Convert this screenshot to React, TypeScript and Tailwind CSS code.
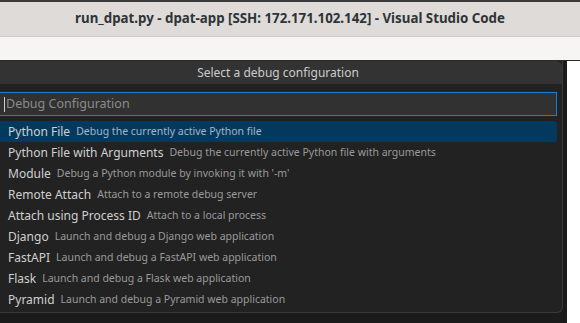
const items: { label: string; desc: string }[] = [
  { label: "Python File", desc: "Debug the currently active Python file" },
  { label: "Python File with Arguments", desc: "Debug the currently active Python file with arguments" },
  { label: "Module", desc: "Debug a Python module by invoking it with '-m'" },
  { label: "Remote Attach", desc: "Attach to a remote debug server" },
  { label: "Attach using Process ID", desc: "Attach to a local process" },
  { label: "Django", desc: "Launch and debug a Django web application" },
  { label: "FastAPI", desc: "Launch and debug a FastAPI web application" },
  { label: "Flask", desc: "Launch and debug a Flask web application" },
  { label: "Pyramid", desc: "Launch and debug a Pyramid web application" },
];

export default function App() {
  return (
    <div
      className="w-[580px] h-[323px] overflow-hidden bg-white flex flex-col"
      style={{ fontFamily: '"Noto Sans", "Open Sans", sans-serif' }}
    >
      {/* window title bar */}
      <div className="h-[2px] bg-[#3b3b3b] shrink-0" />
      <div className="h-[35px] shrink-0 bg-[#dedbd8] border-b border-[#cdc9c5] flex items-center justify-center">
        <span className="text-[13.3px] font-bold text-[#2e3436]">
          run_dpat.py - dpat-app [SSH: 172.171.102.142] - Visual Studio Code
        </span>
      </div>
      <div className="h-[24px] shrink-0 bg-[#f6f5f4] border-b border-[#2b2b2b]" />

      {/* editor area with quick pick */}
      <div className="flex-1 flex">
        <div className="w-[567px] bg-[#1b1b1b] flex flex-col">
          <div className="w-[563px] h-[252px] bg-[#222222] border-r border-b border-[#3a3a3a] rounded-br-[6px] flex flex-col">
            <div className="h-[23px] shrink-0 bg-[#333333] rounded-tr-[6px] flex items-center justify-center pr-[6px]">
              <span className="text-[12px] text-[#cccccc]">Select a debug configuration</span>
            </div>
            <div className="h-[8px] shrink-0" />
            <div className="h-[24px] w-[557px] shrink-0 bg-[#313131] border border-[#1f7ad2] border-l-0 flex items-center pl-[4px]">
              <span className="w-px h-[15px] bg-[#cccccc]" />
              <span className="text-[12.5px] text-[#8b8b8b] ml-px">Debug Configuration</span>
            </div>
            <div className="h-[5px] shrink-0" />
            <div className="flex flex-col w-[557px]">
              {items.map((it, i) => (
                <div
                  key={it.label}
                  className={
                    i === 0
                      ? "h-[21px] flex items-center pl-[8px] bg-[#04395e] rounded-r-[3px]"
                      : "h-[21px] flex items-center pl-[8px]"
                  }
                >
                  <span className="text-[12px] text-[#d0d0d0] whitespace-nowrap">{it.label}</span>
                  <span
                    className={
                      i === 0
                        ? "text-[10.5px] text-[#a3b5c6] ml-[6px] whitespace-nowrap"
                        : "text-[10.5px] text-[#9a9a9a] ml-[6px] whitespace-nowrap"
                    }
                  >
                    {it.desc}
                  </span>
                </div>
              ))}
            </div>
          </div>
        </div>
        <div className="flex-1 bg-white" />
      </div>
    </div>
  );
}
